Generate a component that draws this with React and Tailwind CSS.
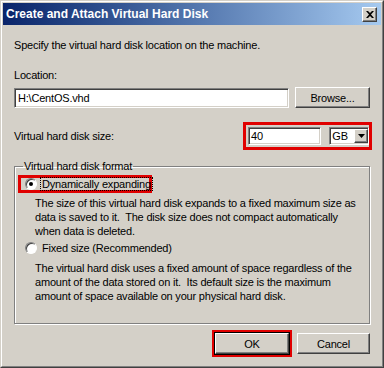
import React from "react";

// classic 3D edges
const sunken =
  "border border-t-[#808080] border-l-[#808080] border-b-white border-r-white shadow-[inset_1px_1px_0_#404040,inset_-1px_-1px_0_#d4d0c8]";
const raised =
  "border border-t-white border-l-white border-b-[#404040] border-r-[#404040] shadow-[inset_-1px_-1px_0_#808080,inset_1px_1px_0_#d4d0c8]";

function Radio({ checked }) {
  return (
    <span className="relative inline-flex h-[12px] w-[12px] shrink-0 items-center justify-center rounded-full border border-t-[#808080] border-l-[#808080] border-b-white border-r-white bg-white shadow-[inset_1px_1px_0_#404040]">
      {checked && <span className="h-[4px] w-[4px] rounded-full bg-black" />}
    </span>
  );
}

export default function App() {
  return (
    <div className="h-[368px] w-[384px] overflow-hidden whitespace-nowrap bg-[#d4d0c8] font-['Liberation_Sans',Arial,sans-serif] text-[11px] leading-[14px] tracking-[-0.2px] text-black">
      <div className="h-full border border-t-[#d4d0c8] border-l-[#d4d0c8] border-b-[#404040] border-r-[#404040]">
        <div className="flex h-full flex-col border border-t-white border-l-white border-b-[#808080] border-r-[#808080] p-px">
          {/* Title bar */}
          <div className="flex h-[22px] items-center justify-between bg-gradient-to-r from-[#0a246a] to-[#a6caf0] pl-[3px] pr-[4px]">
            <span className="text-[12px] font-bold tracking-normal text-white">
              Create and Attach Virtual Hard Disk
            </span>
            <div className={`flex h-[15px] w-[15px] items-center justify-center bg-[#d4d0c8] ${raised}`}>
              <svg width="8" height="7" viewBox="0 0 8 7">
                <path d="M0 0h2l2 2 2-2h2L5 3.5 8 7H6L4 5 2 7H0l3-3.5z" fill="#000" />
              </svg>
            </div>
          </div>

          <div className="flex flex-col px-[11px]">
            <p className="mt-[13px]">Specify the virtual hard disk location on the machine.</p>

            <p className="mt-[16px]">Location:</p>

            <div className="mt-[5px] flex items-center justify-between">
              <div className={`flex h-[20px] w-[275px] items-center bg-white pl-[3px] ${sunken}`}>
                H:\CentOS.vhd
              </div>
              <div className={`flex h-[21px] w-[75px] items-center justify-center bg-[#d4d0c8] ${raised}`}>
                Browse...
              </div>
            </div>

            <div className="mt-[14px] flex items-center justify-between">
              <span>Virtual hard disk size:</span>
              <div className="mr-[-2px] flex h-[28px] w-[129px] items-center gap-[8px] border-[3px] border-[#e00000] pl-[2px]">
                <div className={`flex h-[18px] w-[74px] items-center bg-white pl-[2px] ${sunken}`}>40</div>
                <div className={`flex h-[18px] w-[40px] items-center justify-between bg-white pl-[2px] ${sunken}`}>
                  <span>GB</span>
                  <div className={`flex h-[14px] w-[14px] items-center justify-center bg-[#d4d0c8] ${raised}`}>
                    <svg width="7" height="4" viewBox="0 0 7 4">
                      <path d="M0 0h7L3.5 4z" fill="#000" />
                    </svg>
                  </div>
                </div>
              </div>
            </div>

            {/* Format group */}
            <fieldset className="mt-[9px] h-[165px] border border-[#808080] pb-0 pl-[3px] pr-[3px] pt-0 shadow-[inset_1px_1px_0_#fff,1px_1px_0_#fff]">
              <legend className="ml-[5px] px-[1px]">Virtual hard disk format</legend>

              <div className="mt-[2px] flex h-[18px] w-[134px] items-center border-[3px] border-[#e00000] pl-[4px]">
                <Radio checked />
                <span className="ml-[3px] border border-dotted border-black px-[1px] leading-[12px]">
                  Dynamically expanding
                </span>
              </div>

              <div className="ml-[17px] mt-[3px]">
                <p>The size of this virtual hard disk expands to a fixed maximum size as</p>
                <p>data is saved to it.&nbsp; The disk size does not compact automatically</p>
                <p>when data is deleted.</p>
              </div>

              <div className="mt-[3px] flex items-center pl-[7px]">
                <Radio />
                <span className="ml-[5px]">Fixed size (Recommended)</span>
              </div>

              <div className="ml-[17px] mt-[6px]">
                <p>The virtual hard disk uses a fixed amount of space regardless of the</p>
                <p>amount of the data stored on it.&nbsp; Its default size is the maximum</p>
                <p>amount of space available on your physical hard disk.</p>
              </div>
            </fieldset>

            <div className="mt-[6px] flex items-center justify-end gap-[5px]">
              <div className="flex h-[27px] w-[80px] items-center justify-center border-[3px] border-[#e00000]">
                <div className={`flex h-[21px] w-[74px] items-center justify-center bg-[#d4d0c8] outline outline-1 outline-black ${raised}`}>
                  OK
                </div>
              </div>
              <div className={`flex h-[21px] w-[73px] items-center justify-center bg-[#d4d0c8] ${raised}`}>
                Cancel
              </div>
            </div>
          </div>
        </div>
      </div>
    </div>
  );
}
